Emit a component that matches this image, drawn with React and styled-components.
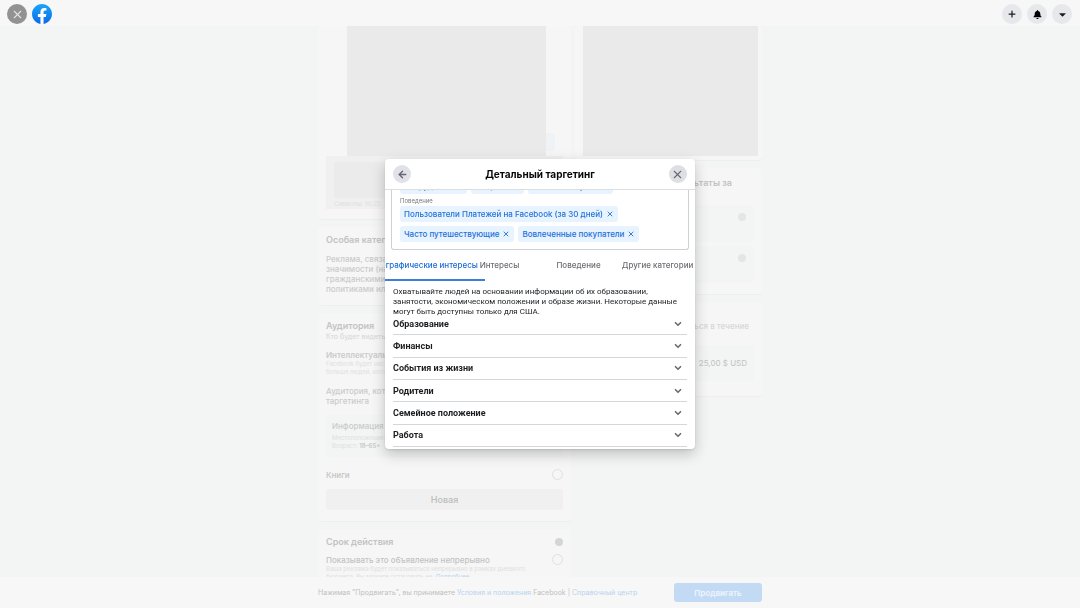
import React, { useState } from 'react';
import styled, { createGlobalStyle } from 'styled-components';
import { ArrowLeft, ChevronDown, Plus, X } from 'lucide-react';
import { FaBell, FaCaretDown } from 'react-icons/fa';

const chips = {
  interests: ['Сотрудники', 'Сборник', 'Онлайн-покупки'],
  behavior: [
    'Пользователи Платежей на Facebook (за 30 дней)',
    'Часто путешествующие',
    'Вовлеченные покупатели',
  ],
};

const tabs = ['Демографические интересы', 'Интересы', 'Поведение', 'Другие категории'];

const categories = [
  'Образование',
  'Финансы',
  'События из жизни',
  'Родители',
  'Семейное положение',
  'Работа',
];

const FacebookLogo = () => (
  <svg width="20" height="20" viewBox="0 0 24 24" aria-label="Facebook">
    <defs>
      <linearGradient id="fb" x1="0" y1="0" x2="0" y2="1">
        <stop offset="0" stopColor="#19a5fb" />
        <stop offset="1" stopColor="#0a6be8" />
      </linearGradient>
    </defs>
    <circle cx="12" cy="12" r="11.5" fill="#fff" />
    <path
      fill="url(#fb)"
      d="M24 12.073c0-6.627-5.373-12-12-12s-12 5.373-12 12c0 5.99 4.388 10.954 10.125 11.854v-8.385H7.078v-3.47h3.047V9.43c0-3.007 1.792-4.669 4.533-4.669 1.312 0 2.686.235 2.686.235v2.953H15.83c-1.491 0-1.956.925-1.956 1.874v2.25h3.328l-.532 3.47h-2.796v8.385C19.612 23.027 24 18.062 24 12.073z"
    />
  </svg>
);

const ChipList = ({ items }) => (
  <Chips>
    {items.map((item) => (
      <Chip key={item}>
        {item}
        <ChipRemove aria-label={`Удалить ${item}`}>
          <X size={8} strokeWidth={3} />
        </ChipRemove>
      </Chip>
    ))}
  </Chips>
);

const TargetingDialog = () => {
  const [active, setActive] = useState(tabs[0]);

  return (
    <Dialog role="dialog" aria-labelledby="dialog-title">
      <DialogHeader>
        <RoundButton aria-label="Назад" $color="#65676b" $bg="#e0e1e9">
          <ArrowLeft size={11} strokeWidth={3} />
        </RoundButton>
        <DialogTitle id="dialog-title">Детальный таргетинг</DialogTitle>
        <RoundButton aria-label="Закрыть" $color="#65676b" $bg="#dddfe4">
          <X size={13} strokeWidth={2} />
        </RoundButton>
      </DialogHeader>
      <DialogBody>
        <Selected>
          <ChipList items={chips.interests} />
          <ChipLabel>Поведение</ChipLabel>
          <ChipList items={chips.behavior} />
        </Selected>
        <Tabs role="tablist">
          {tabs.map((tab) => (
            <Tab
              key={tab}
              role="tab"
              aria-selected={tab === active}
              $active={tab === active}
              onClick={() => setActive(tab)}
            >
              {tab}
            </Tab>
          ))}
        </Tabs>
        <Description>
          Охватывайте людей на основании информации об их образовании, занятости, экономическом
          положении и образе жизни. Некоторые данные могут быть доступны только для США.
        </Description>
        <Categories>
          {categories.map((name) => (
            <Category key={name}>
              {name}
              <ChevronDown size={10} strokeWidth={4} color="#6b6d70" />
            </Category>
          ))}
        </Categories>
      </DialogBody>
    </Dialog>
  );
};

const App = () => (
  <Page>
    <GlobalStyle />
    <Header>
      <HeaderGroup>
        <RoundButton aria-label="Закрыть" $size={20} $color="#e4e4e4" $bg="#929292">
          <X size={13} strokeWidth={2} />
        </RoundButton>
        <FacebookLogo />
      </HeaderGroup>
      <HeaderGroup>
        <RoundButton aria-label="Создать" $size={20} $color="#1c1e21" $bg="#e7e8eb">
          <Plus size={10} strokeWidth={3} />
        </RoundButton>
        <RoundButton aria-label="Уведомления" $size={20} $color="#000" $bg="#e7e8eb">
          <FaBell size={9} />
        </RoundButton>
        <RoundButton aria-label="Аккаунт" $size={20} $color="#1c1e21" $bg="#e7e8eb">
          <FaCaretDown size={11} />
        </RoundButton>
      </HeaderGroup>
    </Header>

    <Main>
      <Column $width={253}>
        <PreviewCard>
          <PreviewRow>
            <Preview />
            <PreviewTag />
          </PreviewRow>
          <Creative>
            <Thumb />
            <Hint>Символы: 16/25</Hint>
          </Creative>
        </PreviewCard>

        <Card>
          <CardTitle>Особая категория рекламы</CardTitle>
          <Text $top={8}>
            Реклама, связанная с социально
            <br />
            значимости (например, с кредитами),
            <br />
            гражданскими правами, выборами,
            <br />
            политиками или трудоустройством
          </Text>
        </Card>

        <Card>
          <CardTitle>Аудитория</CardTitle>
          <Text $light>Кто будет видеть вашу рекламу?</Text>
          <Text $top={8} $bold>
            Интеллектуальная аудитория
          </Text>
          <Hint>
            Facebook будет настраивать вашу аудиторию
            <br />
            больше людей, которым интересен товар
          </Hint>
          <Text $top={10}>
            Аудитория, которую вы выберете с помощью
            <br />
            таргетинга
          </Text>
          <Info>
            <Text>Информация об аудитории</Text>
            <InfoHint>
              Местоположение: Россия
              <br />
              Возраст: <b>18–65+</b>
            </InfoHint>
          </Info>
          <Option $top={12}>
            Книги
            <Radio name="audience" />
          </Option>
          <GreyButton>Новая</GreyButton>
        </Card>

        <Card>
          <CardTitle>
            Срок действия
            <Dot $dark />
          </CardTitle>
          <Option $top={6}>
            Показывать это объявление непрерывно
            <Radio name="duration" />
          </Option>
          <Hint>
            Ваша реклама будет показываться непрерывно в рамках дневного
            <br />
            бюджета. Вы можете остановить ее. <Link href="#more">Подробнее</Link>
          </Hint>
        </Card>
      </Column>

      <Column $width={187}>
        <VideoCard>
          <Video />
        </VideoCard>
        <Card>
          <ResultsTitle>Примерные результаты за</ResultsTitle>
          <Metrics>
            <Metric>
              <Dot />
            </Metric>
            <Metric>
              <Dot />
            </Metric>
          </Metrics>
        </Card>
        <Card>
          <Budget>
            <BudgetText>Будет показываться в течение</BudgetText>
            <Amount>25,00 $ USD</Amount>
          </Budget>
        </Card>
      </Column>
    </Main>

    <Footer>
      <FooterInner>
        <span>
          Нажимая "Продвигать", вы принимаете <Link href="#terms">Условия и положения</Link>{' '}
          Facebook | <Link href="#help">Справочный центр</Link>
        </span>
        <PromoteButton>Продвигать</PromoteButton>
      </FooterInner>
    </Footer>

    <Overlay>
      <TargetingDialog />
    </Overlay>
  </Page>
);

const GlobalStyle = createGlobalStyle`
  * { box-sizing: border-box; }
  body {
    margin: 0;
    font-family: Inter, 'Liberation Sans', sans-serif;
    background: #f3f5f5;
  }
  button {
    padding: 0;
    border: 0;
    background: none;
    font-family: inherit;
    cursor: pointer;
  }
  h1, h2, p { margin: 0; }
`;

const Page = styled.div`
  display: flex;
  flex-direction: column;
  height: 100vh;
`;

const Header = styled.header`
  display: flex;
  justify-content: space-between;
  padding: 4px 8px 2px 7px;
  background: #f7f7f7;
`;

const HeaderGroup = styled.div`
  display: flex;
  gap: 5px;
`;

const RoundButton = styled.button`
  display: flex;
  align-items: center;
  justify-content: center;
  width: ${(p) => p.$size || 18}px;
  height: ${(p) => p.$size || 18}px;
  border-radius: 50%;
  color: ${(p) => p.$color};
  background: ${(p) => p.$bg};
`;

const Main = styled.main`
  flex: 1;
  min-height: 0;
  overflow: hidden;
  display: flex;
  justify-content: center;
  align-items: flex-start;
  gap: 4px;
`;

const Column = styled.div`
  display: flex;
  flex-direction: column;
  gap: 8px;
  width: ${(p) => p.$width}px;
`;

const Card = styled.section`
  padding: 7px 8px 11px;
  border-radius: 4px;
  background: #f6f6f6;
  box-shadow: 0 1px 1px #eeeeee;
`;

const PreviewCard = styled(Card)`
  padding: 0 8px 10px;
`;

const PreviewRow = styled.div`
  display: flex;
  align-items: flex-end;
  padding-left: 21px;
`;

const Preview = styled.div`
  width: 199px;
  height: 130px;
  background: #eaeaea;
`;

const PreviewTag = styled.div`
  width: 9px;
  height: 18px;
  margin-bottom: 5px;
  border-radius: 0 3px 3px 0;
  background: #f0f3f6;
`;

const Creative = styled.div`
  padding: 6px 8px 1px;
  background: #f0f0f0;
`;

const Thumb = styled.div`
  width: 64px;
  height: 36px;
  margin-bottom: 2px;
  background: #ebebeb;
`;

const VideoCard = styled(Card)`
  padding: 0 4px 4px 8px;
`;

const Video = styled.div`
  height: 130px;
  background: #eaeaea;
`;

const CardTitle = styled.h2`
  display: flex;
  align-items: center;
  justify-content: space-between;
  font-size: 9px;
  line-height: 12px;
  font-weight: 600;
  white-space: nowrap;
  color: #c2c3c3;
`;

const ResultsTitle = styled(CardTitle)`
  justify-content: flex-end;
  padding: 2px 22px 16px 0;
`;

const Text = styled.p`
  margin-top: ${(p) => p.$top || 0}px;
  font-size: ${(p) => (p.$light ? 7 : 8)}px;
  line-height: 10px;
  font-weight: ${(p) => (p.$light ? 400 : p.$bold ? 600 : 500)};
  white-space: nowrap;
  color: ${(p) => (p.$light ? '#d4d5d5' : '#cacbcb')};
`;

const Hint = styled.p`
  font-size: 6px;
  line-height: 8px;
  white-space: nowrap;
  color: #dfe0e0;
`;

const Info = styled.div`
  margin-top: 9px;
  padding: 6px 6px 7px;
  border-radius: 4px;
  background: #f3f4f4;
`;

const InfoHint = styled(Hint)`
  margin-top: 3px;
  b {
    font-weight: 600;
    color: #c6c7c7;
  }
`;

const Option = styled.label`
  display: flex;
  align-items: center;
  justify-content: space-between;
  margin-top: ${(p) => p.$top}px;
  font-size: 8px;
  line-height: 10px;
  font-weight: 500;
  color: #c2c3c3;
`;

const Radio = styled.input.attrs({ type: 'radio' })`
  appearance: none;
  width: 11px;
  height: 11px;
  margin: 0;
  border: 1px solid #dfe0e0;
  border-radius: 50%;
`;

const Dot = styled.span`
  width: 8px;
  height: 8px;
  border-radius: 50%;
  background: ${(p) => (p.$dark ? '#d4d5d5' : '#e4e5e5')};
`;

const GreyButton = styled.button`
  width: 100%;
  height: 21px;
  margin-top: 9px;
  border-radius: 3px;
  background: #f0f0f0;
  font-size: 9px;
  font-weight: 500;
  color: #bbbcbc;
`;

const Metrics = styled.div`
  display: grid;
  gap: 4px;
`;

const Metric = styled.div`
  display: flex;
  justify-content: flex-end;
  height: 37px;
  padding: 8px;
  border-radius: 4px;
  background: #f3f4f4;
`;

const Budget = styled.div`
  padding: 12px 0 4px;
`;

const BudgetText = styled(Text)`
  padding-right: 5px;
  text-align: right;
  color: #d6d7d7;
`;

const Amount = styled.div`
  margin-top: 14px;
  padding-right: 7px;
  border-radius: 4px;
  background: #f3f4f4;
  text-align: right;
  font-size: 8px;
  line-height: 36px;
  color: #c2c3c3;
`;

const Link = styled.a`
  color: #b9d3ee;
  text-decoration: none;
`;

const Footer = styled.footer`
  display: flex;
  justify-content: center;
  padding: 6px 0;
  background: #f7f7f7;
`;

const FooterInner = styled.div`
  display: flex;
  align-items: center;
  justify-content: space-between;
  width: 444px;
  font-size: 7px;
  color: #bfc0c0;
`;

const PromoteButton = styled.button`
  width: 88px;
  height: 19px;
  border-radius: 3px;
  background: #c3daf4;
  font-size: 8px;
  font-weight: 600;
  color: #eff5fc;
`;

/* lies over the whole page */
const Overlay = styled.div`
  position: fixed;
  inset: 0;
  display: flex;
  align-items: center;
  justify-content: center;
`;

const Dialog = styled.div`
  display: flex;
  flex-direction: column;
  width: 310px;
  height: 290px;
  border-radius: 4px;
  overflow: hidden;
  background: #fff;
  box-shadow: 0 5px 14px rgba(0, 0, 0, 0.22), 0 1px 2px rgba(0, 0, 0, 0.1);
`;

const DialogHeader = styled.header`
  display: flex;
  align-items: center;
  justify-content: space-between;
  padding: 6px 8px;
  border-bottom: 1px solid #dcdee1;
`;

const DialogTitle = styled.h1`
  font-size: 10px;
  line-height: 12px;
  font-weight: 700;
  color: #080809;
`;

const DialogBody = styled.div`
  flex: 1;
  min-height: 0;
  display: flex;
  flex-direction: column;
`;

/* scrolled to the end, so the first chips are cut by the header */
const Selected = styled.div`
  flex: none;
  display: flex;
  flex-direction: column;
  justify-content: flex-end;
  height: 60px;
  margin: 0 6px;
  padding: 0 8px 7px;
  overflow: hidden;
  border: 1px solid #ced0d4;
  border-top: 0;
  border-radius: 0 0 3px 3px;
`;

const Chips = styled.div`
  display: flex;
  flex-wrap: wrap;
  gap: 4px;
`;

const Chip = styled.span`
  display: flex;
  align-items: center;
  gap: 3px;
  height: 16px;
  padding: 0 4px;
  border-radius: 3px;
  background: #e7f3ff;
  font-size: 8px;
  font-weight: 500;
  white-space: nowrap;
  color: #2371da;
`;

const ChipRemove = styled.button`
  display: flex;
  color: #3a7dd6;
`;

const ChipLabel = styled.div`
  padding-top: 2px;
  font-size: 6px;
  line-height: 10px;
  color: #77797d;
`;

const Tabs = styled.div`
  flex: none;
  display: grid;
  grid-template-columns: repeat(4, 1fr);
  height: 31px;
  margin: 0 -2px 0 -4px;
`;

const Tab = styled.button`
  position: relative;
  display: flex;
  justify-content: center;
  min-width: 0;
  padding-top: 10px;
  font-size: 8px;
  line-height: 10px;
  font-weight: 500;
  white-space: nowrap;
  color: ${(p) => (p.$active ? '#1b6bd6' : '#6c6e72')};

  &::after {
    content: '';
    position: absolute;
    left: 0;
    bottom: 0;
    width: 104px;
    height: 2px;
    background: ${(p) => (p.$active ? '#3c7fdb' : 'transparent')};
  }
`;

const Description = styled.p`
  padding: 6px 12px 0 8px;
  font-family: Roboto, 'Liberation Sans', sans-serif;
  font-size: 8px;
  line-height: 10px;
  font-weight: 400;
  color: #1c1e21;
`;

const Categories = styled.div`
  flex: 1;
  display: grid;
  grid-auto-rows: 1fr;
  margin: -4px 8px 2px;
`;

const Category = styled.button`
  display: flex;
  align-items: center;
  justify-content: space-between;
  padding-right: 4px;
  border-bottom: 1px solid #d4d6d9;
  font-family: Roboto, 'Liberation Sans', sans-serif;
  font-size: 9px;
  font-weight: 700;
  color: #1c1e21;
`;

export default App;
